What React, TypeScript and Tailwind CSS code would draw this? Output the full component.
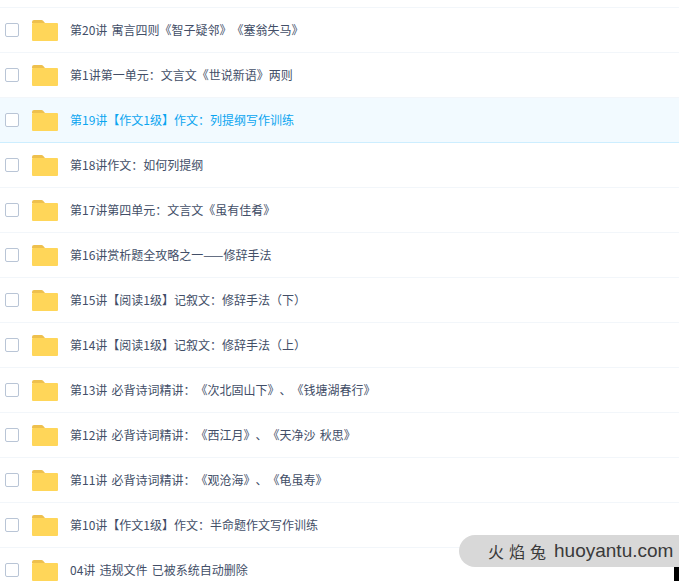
const rows = [
  "第20讲 寓言四则《智子疑邻》《塞翁失马》",
  "第1讲第一单元：文言文《世说新语》两则",
  "第19讲【作文1级】作文：列提纲写作训练",
  "第18讲作文：如何列提纲",
  "第17讲第四单元：文言文《虽有佳肴》",
  "第16讲赏析题全攻略之一——修辞手法",
  "第15讲【阅读1级】记叙文：修辞手法（下）",
  "第14讲【阅读1级】记叙文：修辞手法（上）",
  "第13讲 必背诗词精讲：《次北固山下》、《钱塘湖春行》",
  "第12讲 必背诗词精讲：《西江月》、《天净沙 秋思》",
  "第11讲 必背诗词精讲：《观沧海》、《龟虽寿》",
  "第10讲【作文1级】作文：半命题作文写作训练",
  "04讲 违规文件 已被系统自动删除",
];

function Folder() {
  return (
    <svg width="26" height="21" viewBox="0 0 26 21" className="shrink-0">
      <path d="M0 2a2 2 0 0 1 2-2h7.500a2 2 0 0 1 1.600.8L13 3H0z" fill="#eec04e" />
      <path d="M0 4a1 1 0 0 1 1-1h24a1 1 0 0 1 1 1v16a1 1 0 0 1-1 1H1a1 1 0 0 1-1-1z" fill="#ffd659" />
    </svg>
  );
}

function Row({ title, active }: { title: string; active: boolean }) {
  return (
    <div
      className={
        "flex h-[45px] items-center border-b pl-[5px] " +
        (active ? "border-[#cdeeff] bg-[#f2faff]" : "border-[#f2f6fa] bg-white")
      }
    >
      <span className="h-[14px] w-[14px] shrink-0 rounded-[2px] border border-[#b9c5d6] bg-white" />
      <span className="ml-[13px] mt-[1px]">
        <Folder />
      </span>
      <span
        className={
          "ml-3 whitespace-nowrap text-xs [text-spacing-trim:space-all] [word-spacing:1.5px] " +
          (active ? "text-[#0ba5f0]" : "text-[#424e67]")
        }
      >
        {title}
      </span>
    </div>
  );
}

export default function App() {
  return (
    <div className="relative h-[583px] w-[679px] overflow-hidden bg-white font-['Noto_Sans_CJK_SC','Noto_Sans',sans-serif]">
      <div className="h-[8px] border-b border-[#f2f6fa]" />
      {rows.map((title, i) => (
        <Row key={i} title={title} active={i === 2} />
      ))}
      <div className="absolute left-[459px] top-[535px] flex h-[32px] w-[220px] items-center rounded-l-[16px] bg-[#d8d8d8] pl-[29px] font-['Liberation_Sans',sans-serif] text-[19px] text-[#3a3a3a]">
        <span className="font-['Noto_Sans_CJK_SC',sans-serif] text-[16px] tracking-[5px]">火焰兔</span>
        <span className="ml-[3px]">huoyantu.com</span>
      </div>
      <div className="absolute left-[674px] top-[567px] h-[14px] w-[5px] bg-black" />
    </div>
  );
}
